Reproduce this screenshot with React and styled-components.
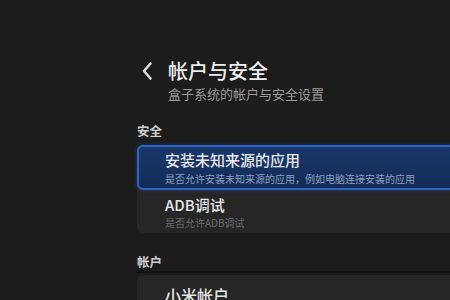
import React from "react";
import styled, { createGlobalStyle } from "styled-components";

const Global = createGlobalStyle`
  html, body {
    margin: 0;
    padding: 0;
    background: #1c1c1c;
    width: 450px;
    height: 300px;
    overflow: hidden;
  }
  body {
    font-family: "Noto Sans CJK SC", "Noto Sans", sans-serif;
  }
`;

const Page = styled.div`
  width: 450px;
  height: 300px;
  overflow: hidden;
  background: #1c1c1c;
`;

const Content = styled.div`
  margin-left: 137px;
  padding-top: 58px;
  width: 400px;
  display: flex;
  flex-direction: column;
`;

const Header = styled.div`
  display: grid;
  grid-template-columns: 27px 1fr;
  padding-left: 4px;
  align-items: start;
`;

const Back = styled.svg`
  width: 12px;
  height: 20px;
  margin-top: 3px;
`;

const Titles = styled.div`
  display: flex;
  flex-direction: column;
  gap: 2px;
`;

const Title = styled.div`
  font-size: 20px;
  line-height: 26px;
  color: #eeeeee;
  font-weight: 500;
`;

const Subtitle = styled.div`
  font-size: 13px;
  line-height: 16px;
  color: #9a9a9a;
`;

const SectionLabel = styled.div`
  font-size: 12.5px;
  line-height: 16px;
  color: #cfcfcf;
  font-weight: 700;
  margin-top: ${(p) => p.$top}px;
  margin-bottom: ${(p) => p.$bottom}px;
`;

const Group = styled.div`
  display: flex;
  flex-direction: column;
  background: #262626;
  border-radius: 6px;
`;

const Item = styled.div`
  box-sizing: border-box;
  height: ${(p) => p.$h}px;
  padding: 4px 0 0 26px;
  border: 2px solid ${(p) => (p.$focused ? "#2d64c6" : "transparent")};
  border-radius: 6px;
  background: ${(p) =>
    p.$focused ? "linear-gradient(180deg, #18386b 0%, #132b54 100%)" : "transparent"};
  box-shadow: ${(p) => (p.$focused ? "0 0 4px rgba(40, 90, 200, 0.45)" : "none")};
  display: flex;
  flex-direction: column;
  gap: ${(p) => p.$gap}px;
`;

const ItemTitle = styled.div`
  font-size: 15px;
  line-height: 18px;
  color: #e8e8e8;
  font-weight: 500;
  white-space: nowrap;
`;

const ItemSub = styled.div`
  font-size: 10px;
  line-height: 12px;
  color: ${(p) => (p.$focused ? "#8d9fbf" : "#6b6b6b")};
  white-space: nowrap;
`;

const Divider = styled.div`
  height: 2px;
  background: #141414;
  margin-bottom: 2px;
`;

const AccountCard = styled.div`
  box-sizing: border-box;
  height: 60px;
  padding: 10px 0 0 28px;
  background: #272727;
  border-radius: 6px;
`;

const AccountTitle = styled.div`
  font-size: 16px;
  line-height: 20px;
  color: #e6e6e6;
  font-weight: 500;
`;

export default function App() {
  return (
    <Page>
      <Global />
      <Content>
        <Header>
          <Back viewBox="0 0 12 20">
            <polyline
              points="9.5,2.5 3,10 9.5,17.5"
              fill="none"
              stroke="#dcdcdc"
              strokeWidth="2.6"
              strokeLinecap="round"
              strokeLinejoin="round"
            />
          </Back>
          <Titles>
            <Title>帐户与安全</Title>
            <Subtitle>盒子系统的帐户与安全设置</Subtitle>
          </Titles>
        </Header>

        <SectionLabel $top={21} $bottom={6}>安全</SectionLabel>
        <Group>
          <Item $focused $h={45} $gap={4}>
            <ItemTitle>安装未知来源的应用</ItemTitle>
            <ItemSub $focused>是否允许安装未知来源的应用，例如电脑连接安装的应用</ItemSub>
          </Item>
          <Item $h={43} $gap={3}>
            <ItemTitle>ADB调试</ItemTitle>
            <ItemSub>是否允许ADB调试</ItemSub>
          </Item>
        </Group>

        <SectionLabel $top={21} $bottom={1}>帐户</SectionLabel>
        <Divider />
        <AccountCard>
          <AccountTitle>小米帐户</AccountTitle>
        </AccountCard>
      </Content>
    </Page>
  );
}
